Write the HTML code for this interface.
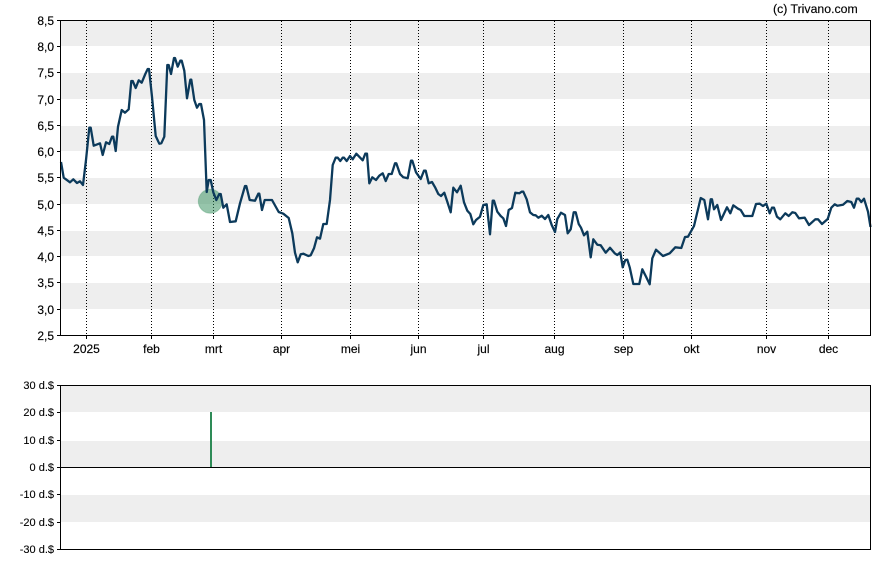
<!DOCTYPE html>
<html><head><meta charset="utf-8"><style>
html,body{margin:0;padding:0;background:#fff;width:888px;height:565px;overflow:hidden}
svg{display:block}
text{font-family:"Liberation Sans",Arial,sans-serif;font-size:12px;fill:#000;stroke:#000;stroke-width:.15px}
.s text{font-size:11px;stroke-width:.1px}
</style></head><body>
<svg width="888" height="565" viewBox="0 0 888 565" xmlns="http://www.w3.org/2000/svg">
<rect width="888" height="565" fill="#fff"/>
<g fill="#eeeeee">
<rect x="61" y="21" width="809" height="25"/>
<rect x="61" y="73" width="809" height="26"/>
<rect x="61" y="126" width="809" height="25"/>
<rect x="61" y="178" width="809" height="26"/>
<rect x="61" y="231" width="809" height="25"/>
<rect x="61" y="283" width="809" height="26"/>
<rect x="61" y="386" width="809" height="26"/>
<rect x="61" y="441" width="809" height="26"/>
<rect x="61" y="495" width="809" height="27"/>
</g>
<g stroke="#000" stroke-width="1" stroke-dasharray="1 2" fill="none">
<path d="M86.5 21V335M151.5 21V335M213.5 21V335M281.5 21V335M350.5 21V335M418.5 21V335M483.5 21V335M554.5 21V335M623.5 21V335M691.5 21V335M766.5 21V335M828.5 21V335"/>
</g>
<circle cx="210.3" cy="201.3" r="12" fill="#2e8b57" fill-opacity="0.5" stroke="#2e8b57" stroke-opacity="0.3" stroke-width="1"/>
<path fill="none" stroke="#0c3a5b" stroke-width="2.3" stroke-linejoin="round" d="M61 162L63.7 177.7L70 182.3L73.3 179.3L77 183L80 181.3L83 185L86 160L89.3 127.7L90.7 127.7L93.7 145.7L100 143.3L102.7 155L106 142.3L109.3 144L112 136.7L113.3 136.7L115.7 151L118 126.7L121.7 110L125 112.7L128.7 109.3L131.3 81L132.7 81L135.7 88L138.7 80.3L141.7 82.7L145.3 74L147.7 69L149 69L152 96.7L155.7 136L159.3 143.7L161.3 143.3L164.3 136.7L167.3 65L168.7 65L171 74L174 58L175 58L177.7 66.7L180.3 60.7L181.7 60.7L184.3 70.7L187 98.3L190.3 79.7L191.3 79.7L194.3 100L197 107.7L199.3 104L201 104L204 120L206.7 192L208.7 180L210.7 180L213.3 192.3L216.3 200L219.3 194L220.7 194L223.3 207.7L226.7 204.3L230 222L235.7 221.3L240 203.3L245 186L246.3 186L249.7 200L255 200.7L258.3 193.7L259.3 193.7L262 210L264.7 200L272 200L278.7 212L283.3 213.7L288.7 218L292.3 233.3L295 252.7L297.7 262.3L300.7 254.3L303.3 253.7L308.3 256L310.7 255.3L314 248.3L317 237.3L320 238.7L323.3 224L326.7 224L330 200L332.7 165L335.7 157.7L337.7 157.7L340.3 161L342.7 157.7L344 157.7L346.7 161L350 156L352.7 159.3L356.3 153.7L362.7 160.3L365.3 153.7L367 153.7L369.3 183.3L372.3 177.3L376 180L379.3 175.7L382.7 173.3L385.7 181L388.7 174L391.7 174L395 163.3L396.3 163.3L400 174L403.3 177.3L407.7 178.3L411 160.7L412.3 160.7L416 172.3L420.7 179L424 170.7L425.7 170.7L428.7 183.3L432 182L435.3 187.7L438.3 194L441 196L444.3 192.7L447.3 201.7L450.7 212.3L453.3 187.7L457 192.3L460.7 185.7L464 202.3L467.3 210.7L470.3 214L473.3 224.3L476 220L480 216.7L483.3 205L486.7 204.3L490 234.3L492.7 200.7L494 200.7L497.3 211.7L500.7 216L503.3 218.3L506 226L508.7 210L512 208L515.3 192.7L519.3 193.3L521.7 191.7L523.3 191.7L526.7 199.3L530 212.3L533.3 215L535.7 215.3L538.3 217.7L541.7 215.7L545 219L548.3 215L551.7 225L555 232L557.3 219L561 212.7L565 215L567.7 233.3L570.7 229.3L573.7 212.3L575.7 212.3L578.7 224L581 227.7L584 235.3L587.3 231.7L590.7 257.3L593.3 239.3L597.3 244.7L600.7 245.3L605.7 252.7L610 247.7L614.7 253.3L617.3 255L620.3 252.3L622.7 267.3L625.3 260L627.3 259.7L629.7 267.3L633.3 284L639.3 284L642.3 269.3L645.7 276L649.7 284.3L652.3 258.3L656 249.7L663 256L669.7 253.3L675.3 247.3L681.3 248L685 237L688 236.7L694 226L700.7 198L704.3 200L708 219.3L710.7 199.3L712 199.3L714 209.3L717.3 205L721 220L727 207.3L730.3 213.3L733.3 205.3L738 208.7L740.7 210L744.3 216L752.3 216L756 204L759.7 203.7L763 206L766.3 203.7L769.7 213.3L772 207.7L774 207.7L777 216.7L780.3 219.3L785.3 213.3L788.7 216L792.3 212.3L795.3 213L799 218.3L804.7 217.7L809 225L815.3 219.3L818 219.3L822 224L827.7 219L831.3 207.7L834.7 204.3L837.3 205.7L843 204.7L847.3 201L851.3 202L854 207.7L856.7 198.7L858.7 198.7L861.3 202L864 198.7L868 211.7L870.5 227"/>
<g stroke="#000" stroke-width="1" fill="none" shape-rendering="crispEdges">
<path d="M60.5 20.5H870.5V335.5H60.5Z"/>
<path d="M57 20.5H60M57 46.5H60M57 72.5H60M57 99.5H60M57 125.5H60M57 151.5H60M57 177.5H60M57 204.5H60M57 230.5H60M57 256.5H60M57 282.5H60M57 309.5H60M57 335.5H60"/>
<path d="M86.5 336V339M151.5 336V339M213.5 336V339M281.5 336V339M350.5 336V339M418.5 336V339M483.5 336V339M554.5 336V339M623.5 336V339M691.5 336V339M766.5 336V339M828.5 336V339"/>
<path d="M60.5 385.5H870.5V549.5H60.5Z"/>
<path d="M61 467.5H870"/>
<path d="M57 385.5H60M57 412.5H60M57 440.5H60M57 467.5H60M57 494.5H60M57 522.5H60M57 549.5H60"/>
</g>
<rect x="210" y="412" width="2" height="55" fill="#2e8b57"/>
<g text-anchor="end">
<text x="54" y="25">8,5</text>
<text x="54" y="51">8,0</text>
<text x="54" y="77">7,5</text>
<text x="54" y="104">7,0</text>
<text x="54" y="130">6,5</text>
<text x="54" y="156">6,0</text>
<text x="54" y="182">5,5</text>
<text x="54" y="209">5,0</text>
<text x="54" y="235">4,5</text>
<text x="54" y="261">4,0</text>
<text x="54" y="287">3,5</text>
<text x="54" y="314">3,0</text>
<text x="54" y="340">2,5</text>
</g>
<g text-anchor="end" class="s">
<text x="54" y="389">30 d.$</text>
<text x="54" y="416">20 d.$</text>
<text x="54" y="444">10 d.$</text>
<text x="54" y="471">0 d.$</text>
<text x="54" y="498">-10 d.$</text>
<text x="54" y="526">-20 d.$</text>
<text x="54" y="553">-30 d.$</text>
</g>
<g text-anchor="middle">
<text x="86.5" y="353">2025</text>
<text x="151.5" y="353">feb</text>
<text x="213.5" y="353">mrt</text>
<text x="281.5" y="353">apr</text>
<text x="350.5" y="353">mei</text>
<text x="418.5" y="353">jun</text>
<text x="483.5" y="353">jul</text>
<text x="554.5" y="353">aug</text>
<text x="623.5" y="353">sep</text>
<text x="691.5" y="353">okt</text>
<text x="766.5" y="353">nov</text>
<text x="828.5" y="353">dec</text>
</g>
<text x="773" y="13" style="font-size:12.3px">(c) Trivano.com</text>
</svg>
</body></html>
